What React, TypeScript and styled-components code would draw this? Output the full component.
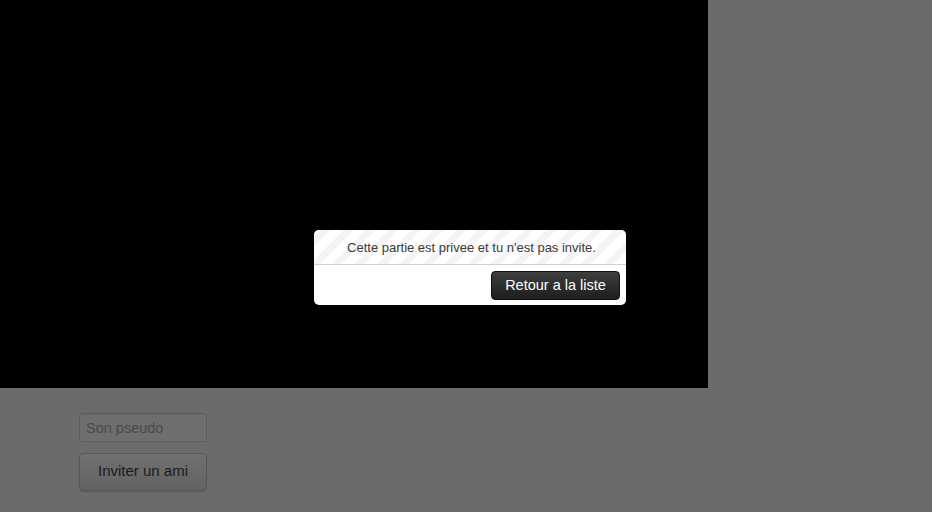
import React from "react";
import styled, { createGlobalStyle } from "styled-components";

const Global = createGlobalStyle`
  html, body { margin: 0; padding: 0; background: #6b6b6b; }
  body { font-family: "Liberation Sans", Arial, sans-serif; width: 932px; height: 512px; overflow: hidden; }
`;

const Page = styled.div`
  position: relative;
  width: 932px;
  height: 512px;
  background: #6b6b6b;
`;

const Canvas = styled.div`
  width: 708px;
  height: 388px;
  background: #000;
`;

const Form = styled.div`
  display: flex;
  flex-direction: column;
  gap: 11px;
  padding: 25px 0 0 79px;
  width: 128px;
`;

const Input = styled.input`
  box-sizing: border-box;
  width: 128px;
  height: 29px;
  padding: 0 6px;
  border: 1px solid #5c5c5c;
  border-radius: 3px;
  background: #6e6e6e;
  font-family: "Liberation Sans", Arial, sans-serif;
  font-size: 14.5px;
  color: #3d3d3d;
  outline: none;
  box-shadow: inset 0 1px 1px rgba(0,0,0,0.06);
  &::placeholder { color: #4a4a4a; }
`;

const InviteButton = styled.button`
  box-sizing: border-box;
  width: 128px;
  height: 38px;
  border: 1px solid #575757;
  border-radius: 4px;
  background: linear-gradient(#717171, #626262);
  font-family: "Liberation Sans", Arial, sans-serif;
  font-size: 15px;
  color: #1a1a1a;
  padding: 0 0 3px 0;
  box-shadow: 0 1px 1px rgba(0,0,0,0.12);
`;

const Modal = styled.div`
  position: absolute;
  left: 314px;
  top: 230px;
  width: 312px;
  height: 75px;
  box-sizing: border-box;
  background: #fff;
  border-radius: 5px;
  overflow: hidden;
  display: flex;
  flex-direction: column;
`;

const ModalHeader = styled.div`
  height: 35px;
  box-sizing: border-box;
  border-bottom: 1px solid #d0d0d0;
  display: flex;
  align-items: center;
  justify-content: center;
  padding: 0 0 0 3px;
  font-size: 13px;
  color: #3a3a3a;
  background: repeating-linear-gradient(
    -45deg,
    #ffffff 0px,
    #ffffff 9px,
    #f4f4f4 9px,
    #f4f4f4 16px
  );
`;

const ModalFooter = styled.div`
  flex: 1;
  display: flex;
  align-items: center;
  justify-content: flex-end;
  padding: 0 6px 0 0;
`;

const DarkButton = styled.button`
  box-sizing: border-box;
  width: 129px;
  height: 29px;
  border: 1px solid #111;
  border-radius: 4px;
  background: linear-gradient(#3e3e3e, #1e1e1e);
  color: #fff;
  font-family: "Liberation Sans", Arial, sans-serif;
  font-size: 14.5px;
  padding: 0;
`;

export default function App() {
  return (
    <Page>
      <Global />
      <Canvas />
      <Form>
        <Input placeholder="Son pseudo" />
        <InviteButton>Inviter un ami</InviteButton>
      </Form>
      <Modal>
        <ModalHeader>Cette partie est privee et tu n'est pas invite.</ModalHeader>
        <ModalFooter>
          <DarkButton>Retour a la liste</DarkButton>
        </ModalFooter>
      </Modal>
    </Page>
  );
}
